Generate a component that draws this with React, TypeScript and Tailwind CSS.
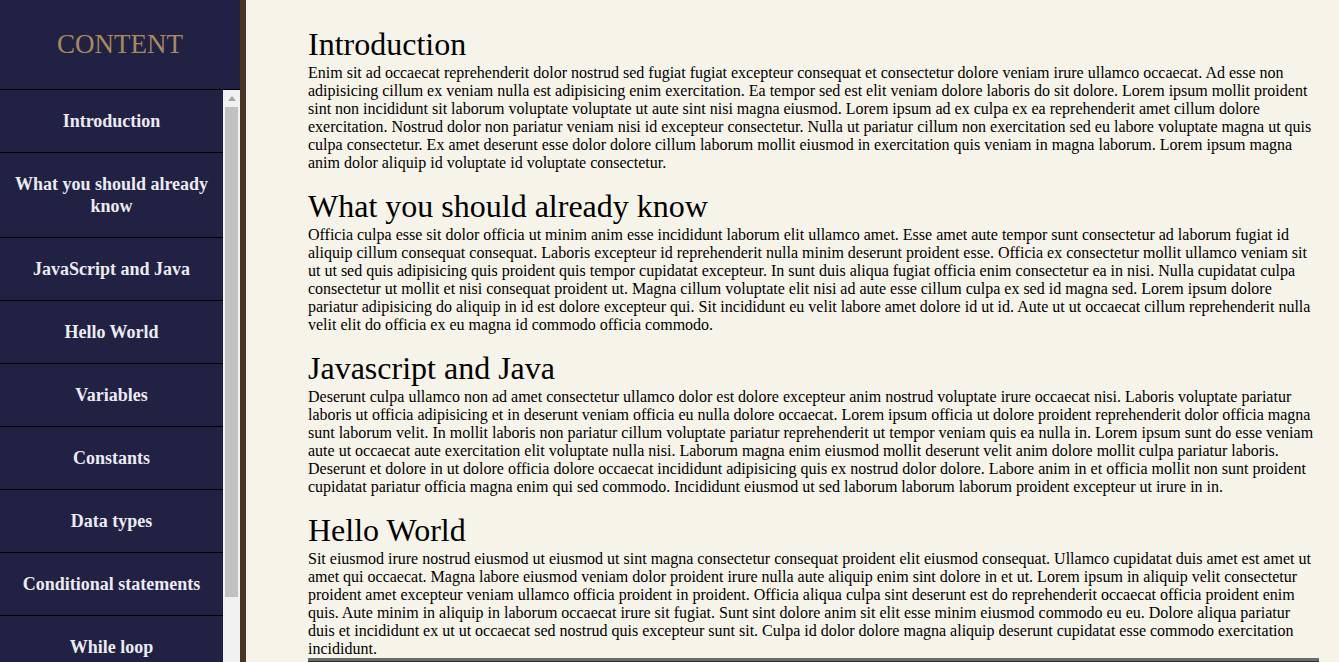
import React from "react";

const navItems = [
  "Introduction",
  "What you should already know",
  "JavaScript and Java",
  "Hello World",
  "Variables",
  "Constants",
  "Data types",
  "Conditional statements",
  "While loop",
  "For loop",
  "Function declarations",
  "Reference",
];

const sections = [
  {
    title: "Introduction",
    body: "Enim sit ad occaecat reprehenderit dolor nostrud sed fugiat fugiat excepteur consequat et consectetur dolore veniam irure ullamco occaecat. Ad esse non adipisicing cillum ex veniam nulla est adipisicing enim exercitation. Ea tempor sed est elit veniam dolore laboris do sit dolore. Lorem ipsum mollit proident sint non incididunt sit laborum voluptate voluptate ut aute sint nisi magna eiusmod. Lorem ipsum ad ex culpa ex ea reprehenderit amet cillum dolore exercitation. Nostrud dolor non pariatur veniam nisi id excepteur consectetur. Nulla ut pariatur cillum non exercitation sed eu labore voluptate magna ut quis culpa consectetur. Ex amet deserunt esse dolor dolore cillum laborum mollit eiusmod in exercitation quis veniam in magna laborum. Lorem ipsum magna anim dolor aliquip id voluptate id voluptate consectetur.",
  },
  {
    title: "What you should already know",
    body: "Officia culpa esse sit dolor officia ut minim anim esse incididunt laborum elit ullamco amet. Esse amet aute tempor sunt consectetur ad laborum fugiat id aliquip cillum consequat consequat. Laboris excepteur id reprehenderit nulla minim deserunt proident esse. Officia ex consectetur mollit ullamco veniam sit ut ut sed quis adipisicing quis proident quis tempor cupidatat excepteur. In sunt duis aliqua fugiat officia enim consectetur ea in nisi. Nulla cupidatat culpa consectetur ut mollit et nisi consequat proident ut. Magna cillum voluptate elit nisi ad aute esse cillum culpa ex sed id magna sed. Lorem ipsum dolore pariatur adipisicing do aliquip in id est dolore excepteur qui. Sit incididunt eu velit labore amet dolore id ut id. Aute ut ut occaecat cillum reprehenderit nulla velit elit do officia ex eu magna id commodo officia commodo.",
  },
  {
    title: "Javascript and Java",
    body: "Deserunt culpa ullamco non ad amet consectetur ullamco dolor est dolore excepteur anim nostrud voluptate irure occaecat nisi. Laboris voluptate pariatur laboris ut officia adipisicing et in deserunt veniam officia eu nulla dolore occaecat. Lorem ipsum officia ut dolore proident reprehenderit dolor officia magna sunt laborum velit. In mollit laboris non pariatur cillum voluptate pariatur reprehenderit ut tempor veniam quis ea nulla in. Lorem ipsum sunt do esse veniam aute ut occaecat aute exercitation elit voluptate nulla nisi. Laborum magna enim eiusmod mollit deserunt velit anim dolore mollit culpa pariatur laboris. Deserunt et dolore in ut dolore officia dolore occaecat incididunt adipisicing quis ex nostrud dolor dolore. Labore anim in et officia mollit non sunt proident cupidatat pariatur officia magna enim qui sed commodo. Incididunt eiusmod ut sed laborum laborum laborum proident excepteur ut irure in in.",
  },
  {
    title: "Hello World",
    body: "Sit eiusmod irure nostrud eiusmod ut eiusmod ut sint magna consectetur consequat proident elit eiusmod consequat. Ullamco cupidatat duis amet est amet ut amet qui occaecat. Magna labore eiusmod veniam dolor proident irure nulla aute aliquip enim sint dolore in et ut. Lorem ipsum in aliquip velit consectetur proident amet excepteur veniam ullamco officia proident in proident. Officia aliqua culpa sint deserunt est do reprehenderit occaecat officia proident enim quis. Aute minim in aliquip in laborum occaecat irure sit fugiat. Sunt sint dolore anim sit elit esse minim eiusmod commodo eu eu. Dolore aliqua pariatur duis et incididunt ex ut ut occaecat sed nostrud quis excepteur sunt sit. Culpa id dolor dolore magna aliquip deserunt cupidatat esse commodo exercitation incididunt.",
  },
];

export default function App() {
  return (
    <div className="flex h-[662px] w-full overflow-hidden font-['Liberation_Serif','Times_New_Roman',serif]">
      <aside className="flex w-[246px] shrink-0 flex-col border-r-[6px] border-[#4a3523] bg-[#202143]">
        <div className="flex h-[90px] shrink-0 items-center justify-center border-b border-black text-[27px] leading-none text-[#a68a5e]">
          CONTENT
        </div>
        <div className="flex min-h-0 flex-1">
          <nav className="min-h-0 flex-1 overflow-hidden">
            <ul>
              {navItems.map((item) => (
                <li
                  key={item}
                  className="border-b border-black px-3 py-[20px] text-center text-[18px] font-bold leading-[22px] text-[#ebebf1]"
                >
                  {item}
                </li>
              ))}
            </ul>
          </nav>
          <div className="flex w-[17px] shrink-0 flex-col bg-[#f1f1f1]">
            <div className="flex h-[17px] items-center justify-center">
              <svg width="8" height="5" viewBox="0 0 8 5">
                <polygon points="0,5 4,0 8,5" fill="#a3a3a3" />
              </svg>
            </div>
            <div className="mx-[2px] h-[490px] bg-[#c1c1c1]" />
          </div>
        </div>
      </aside>
      <main className="min-w-0 flex-1 overflow-hidden bg-[#f6f3e8] pl-[62px] pr-[20px] pt-[28px] text-black">
        <div className="flex flex-col gap-[18px]">
          {sections.map((s) => (
            <section key={s.title}>
              <h1 className="mb-[3px] text-[32px] font-normal leading-[33px]">{s.title}</h1>
              <p className="text-[16px] leading-[18px]">{s.body}</p>
            </section>
          ))}
        </div>
        <div className="h-[60px] border-t-[3px] border-[#6b6b6b] bg-[#2b2b2b]" />
      </main>
    </div>
  );
}
